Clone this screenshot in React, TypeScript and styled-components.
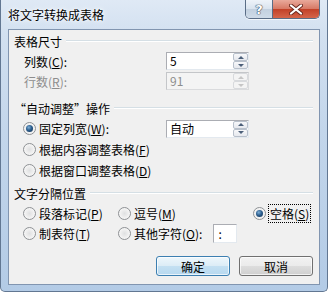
import styled, { createGlobalStyle } from "styled-components";

const GlobalStyle = createGlobalStyle`
  html, body {
    margin: 0;
    padding: 0;
  }
  body {
    width: 328px;
    height: 292px;
    overflow: hidden;
    font-family: "Noto Sans CJK SC", "DejaVu Sans", sans-serif;
    font-size: 12px;
    color: #000;
  }
  u {
    text-decoration: underline;
    text-underline-offset: 1px;
  }
`;

export default function App() {
  return (
    <>
      <GlobalStyle />
      <Window>
        <TitleBar>
          <Title>将文字转换成表格</Title>
          <CaptionButtons>
            <HelpButton>?</HelpButton>
            <CloseButton>
              <svg width="14" height="11" viewBox="0 0 14 11">
                <path
                  d="M2 1.5 L12 9.5 M12 1.5 L2 9.5"
                  stroke="#6b2a20"
                  strokeWidth="4"
                  strokeLinecap="round"
                />
                <path
                  d="M2 1.5 L12 9.5 M12 1.5 L2 9.5"
                  stroke="#fff"
                  strokeWidth="2.2"
                  strokeLinecap="round"
                />
              </svg>
            </CloseButton>
          </CaptionButtons>
        </TitleBar>
        <Client>
          <GroupHeader>
            <span>表格尺寸</span>
            <Rule />
          </GroupHeader>
          <FieldRow>
            <FieldLabel>
              列数(<u>C</u>):
            </FieldLabel>
            <SpinBox>
              <SpinText>5</SpinText>
              <SpinArrows>
                <ArrowButton>
                  <Tri up />
                </ArrowButton>
                <ArrowButton>
                  <Tri />
                </ArrowButton>
              </SpinArrows>
            </SpinBox>
          </FieldRow>
          <FieldRow>
            <FieldLabel disabled>
              行数(<u>R</u>):
            </FieldLabel>
            <SpinBox disabled>
              <SpinText>91</SpinText>
              <SpinArrows>
                <ArrowButton disabled>
                  <Tri up disabled />
                </ArrowButton>
                <ArrowButton disabled>
                  <Tri disabled />
                </ArrowButton>
              </SpinArrows>
            </SpinBox>
          </FieldRow>

          <GroupHeader spaced>
            <span>“自动调整”操作</span>
            <Rule />
          </GroupHeader>
          <FitRow>
            <Option>
              <Radio checked />
              <span>
                固定列宽(<u>W</u>):
              </span>
            </Option>
            <SpinBox>
              <SpinText>自动</SpinText>
              <SpinArrows>
                <ArrowButton>
                  <Tri up />
                </ArrowButton>
                <ArrowButton>
                  <Tri />
                </ArrowButton>
              </SpinArrows>
            </SpinBox>
          </FitRow>
          <FitRow>
            <Option>
              <Radio />
              <span>
                根据内容调整表格(<u>F</u>)
              </span>
            </Option>
          </FitRow>
          <FitRow>
            <Option>
              <Radio />
              <span>
                根据窗口调整表格(<u>D</u>)
              </span>
            </Option>
          </FitRow>

          <GroupHeader>
            <span>文字分隔位置</span>
            <Rule />
          </GroupHeader>
          <SeparatorGrid>
            <Option>
              <Radio />
              <span>
                段落标记(<u>P</u>)
              </span>
            </Option>
            <Option>
              <Radio />
              <span>
                逗号(<u>M</u>)
              </span>
            </Option>
            <Option>
              <Radio checked />
              <Focused>
                空格(<u>S</u>)
              </Focused>
            </Option>
            <Option>
              <Radio />
              <span>
                制表符(<u>T</u>)
              </span>
            </Option>
            <Option>
              <Radio />
              <span>
                其他字符(<u>O</u>):
              </span>
              <CharBox>:</CharBox>
            </Option>
          </SeparatorGrid>

          <ButtonRow>
            <PushButton primary>确定</PushButton>
            <PushButton>取消</PushButton>
          </ButtonRow>
        </Client>
      </Window>
    </>
  );
}

const Window = styled.div`
  box-sizing: border-box;
  width: 328px;
  height: 292px;
  display: flex;
  flex-direction: column;
  padding: 0 7px 6px 7px;
  border: 1px solid #627792;
  border-top: none;
  border-radius: 0 0 5px 5px;
  background: linear-gradient(
    180deg,
    #dfe9f5 0%,
    #d2e0f0 12%,
    #c3d6eb 45%,
    #b3cbe6 100%
  );
`;

const TitleBar = styled.div`
  height: 29px;
  display: flex;
  align-items: flex-start;
`;

const Title = styled.div`
  flex: 1;
  padding-top: 7px;
  line-height: 16px;
  color: #000;
  text-shadow: 0 0 6px #ffffff, 0 0 3px #ffffff;
`;

const CaptionButtons = styled.div`
  display: flex;
  border: 1px solid #5a6d86;
  border-top: none;
  border-radius: 0 0 5px 5px;
  overflow: hidden;
  box-shadow: 0 1px 0 rgba(255, 255, 255, 0.7);
`;

const HelpButton = styled.div`
  width: 26px;
  height: 18px;
  display: flex;
  align-items: center;
  justify-content: center;
  font-family: "DejaVu Sans", sans-serif;
  font-weight: bold;
  font-size: 13px;
  color: #ffffff;
  text-shadow: 0 0 1px #2c3e55, 0 0 1px #2c3e55, 0 0 1px #2c3e55;
  border-right: 1px solid #5a6d86;
  background: linear-gradient(180deg, #eef3f9 0%, #d9e3ee 50%, #c2d0df 51%, #cfdbe8 100%);
`;

const CloseButton = styled.div`
  width: 46px;
  height: 18px;
  display: flex;
  align-items: center;
  justify-content: center;
  background: linear-gradient(180deg, #e9a99b 0%, #d77a66 48%, #c24128 52%, #d5654a 100%);
`;

const Client = styled.div`
  flex: 1;
  display: flex;
  flex-direction: column;
  padding: 1px 6px 0 5px;
  background: #f0f0f0;
  border: 1px solid #8195b0;
`;

const GroupHeader = styled.div<{ spaced?: boolean }>`
  height: 20px;
  display: flex;
  align-items: center;
  margin-top: ${(p) => (p.spaced ? "7px" : "2px")};
  &:first-child {
    margin-top: 0;
  }
`;

const Rule = styled.div`
  flex: 1;
  height: 0;
  margin-left: 4px;
  border-top: 1px solid #d5dfe5;
  border-bottom: 1px solid #ffffff;
`;

const FieldRow = styled.div`
  height: 20px;
  display: grid;
  grid-template-columns: 142px 83px;
  align-items: center;
  padding-left: 10px;
`;

const FieldLabel = styled.span<{ disabled?: boolean }>`
  color: ${(p) => (p.disabled ? "#8d8d8d" : "#000")};
`;

const SpinBox = styled.div<{ disabled?: boolean }>`
  box-sizing: border-box;
  width: 83px;
  height: 18px;
  display: flex;
  border: 1px solid ${(p) => (p.disabled ? "#c4c6c9" : "#abadb3")};
  border-right-color: ${(p) => (p.disabled ? "#dadbdd" : "#e3e9ef")};
  border-bottom-color: ${(p) => (p.disabled ? "#dadbdd" : "#e3e9ef")};
  background: ${(p) => (p.disabled ? "#f4f4f4" : "#ffffff")};
  color: ${(p) => (p.disabled ? "#8d8d8d" : "#000")};
`;

const SpinText = styled.div`
  flex: 1;
  padding-left: 3px;
  line-height: 16px;
  font-family: "Noto Sans CJK SC", "DejaVu Sans", sans-serif;
`;

const SpinArrows = styled.div`
  width: 15px;
  display: flex;
  flex-direction: column;
`;

const ArrowButton = styled.div<{ disabled?: boolean }>`
  flex: 1;
  display: flex;
  align-items: center;
  justify-content: center;
  border: 1px solid ${(p) => (p.disabled ? "#d8dadd" : "#b8c0cb")};
  border-radius: 2px;
  background: ${(p) =>
    p.disabled
      ? "#f4f4f4"
      : "linear-gradient(180deg, #f7f8fa 0%, #e6e9ee 100%)"};
`;

const Tri = styled.div<{ up?: boolean; disabled?: boolean }>`
  width: 0;
  height: 0;
  border-left: 3px solid transparent;
  border-right: 3px solid transparent;
  ${(p) =>
    p.up
      ? `border-bottom: 3px solid ${p.disabled ? "#c6c6c6" : "#4c607a"};`
      : `border-top: 3px solid ${p.disabled ? "#c6c6c6" : "#4c607a"};`}
`;

const FitRow = styled.div`
  height: 21px;
  display: grid;
  grid-template-columns: 143px 83px;
  align-items: center;
  padding-left: 9px;
`;

const Option = styled.label`
  display: flex;
  align-items: center;
  gap: 3px;
  white-space: nowrap;
`;

const Radio = styled.span<{ checked?: boolean }>`
  box-sizing: border-box;
  width: 13px;
  height: 13px;
  margin-right: 0;
  border-radius: 50%;
  border: 1px solid #8e9194;
  background: radial-gradient(circle at 50% 50%, #dfe0e1 0%, #f1f1f1 55%, #ffffff 100%);
  display: flex;
  align-items: center;
  justify-content: center;
  flex-shrink: 0;
  &::after {
    content: "";
    display: ${(p) => (p.checked ? "block" : "none")};
    width: 7px;
    height: 7px;
    border-radius: 50%;
    background: radial-gradient(circle at 40% 35%, #7fb0d8 0%, #2d5f8f 45%, #0f2c4c 100%);
  }
`;

const Focused = styled.span`
  outline: 1px dotted #000;
  outline-offset: 0;
  padding: 0 1px;
`;

const SeparatorGrid = styled.div`
  display: grid;
  grid-template-columns: 95px 135px auto;
  grid-auto-rows: 20px;
  align-items: center;
  padding-left: 9px;
`;

const CharBox = styled.div`
  box-sizing: border-box;
  width: 24px;
  height: 19px;
  margin-left: 8px;
  padding-left: 4px;
  line-height: 17px;
  background: #ffffff;
  border: 1px solid #abadb3;
  border-right-color: #e3e9ef;
  border-bottom-color: #e3e9ef;
`;

const ButtonRow = styled.div`
  display: flex;
  justify-content: flex-end;
  gap: 9px;
  margin-top: 13px;
`;

const PushButton = styled.button<{ primary?: boolean }>`
  box-sizing: border-box;
  width: 74px;
  height: 20px;
  padding: 0;
  font-family: "Noto Sans CJK SC", "DejaVu Sans", sans-serif;
  font-size: 12px;
  color: #000;
  border-radius: 3px;
  border: 1px solid ${(p) => (p.primary ? "#3c7fb1" : "#707070")};
  background: ${(p) =>
    p.primary
      ? "linear-gradient(180deg, #eef7fc 0%, #dcecf6 50%, #c4e0f2 51%, #b7d8ef 100%)"
      : "linear-gradient(180deg, #f2f2f2 0%, #ebebeb 50%, #dddddd 51%, #cfcfcf 100%)"};
  box-shadow: inset 0 0 0 1px rgba(255, 255, 255, 0.7);
`;
